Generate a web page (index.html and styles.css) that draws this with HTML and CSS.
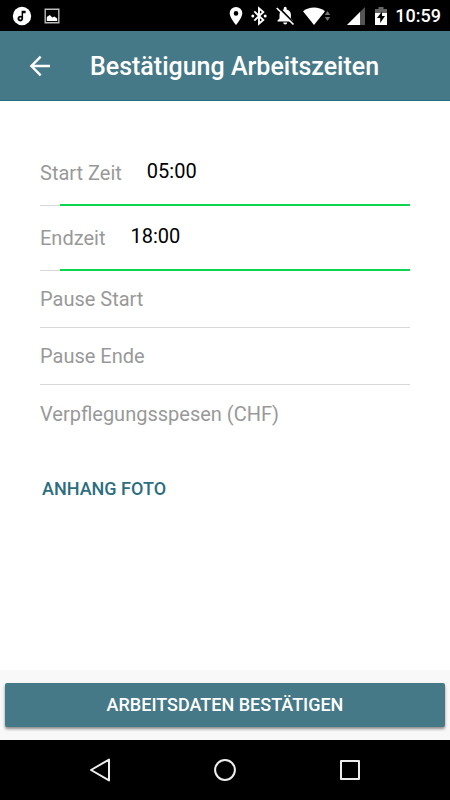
FILE: index.html
```html
<!DOCTYPE html>
<html lang="de">
<head>
<meta charset="utf-8">
<meta name="viewport" content="width=device-width, initial-scale=1">
<title>Bestätigung Arbeitszeiten</title>
<link rel="stylesheet" href="styles.css">
</head>
<body>
<div class="status">
  <svg class="icon" width="20" height="20" viewBox="0 0 20 20"><circle cx="10" cy="10" r="9.2" fill="#fff"/><path d="M9.6 4.800h4v2.400h-2.500v5.300a2.800 2.800 0 1 1-1.500-2.400z" fill="#000"/><circle cx="8.400" cy="12.500" r="1" fill="#fff"/></svg>
  <svg class="icon" width="20" height="20" viewBox="0 0 20 20"><path d="M3.200 3.200h13.600v13.600H3.200z" fill="none" stroke="#bbb" stroke-width="1.400"/><path d="M4.800 15v-4l3-2 2.500 2.500 2-1 2.900 2V15z" fill="#fff"/></svg>
  <span class="spacer"></span>
  <svg class="icon" width="14" height="20" viewBox="0 0 14 20"><path fill-rule="evenodd" d="M7 1a6.300 6.300 0 0 0-6.300 6.300C.7 12 7 19 7 19s6.300-7 6.300-11.700A6.300 6.300 0 0 0 7 1zm0 4.100a2.300 2.300 0 1 1 0 4.600 2.300 2.300 0 0 1 0-4.600z" fill="#fff"/></svg>
  <svg class="icon bluetooth" width="16" height="20" viewBox="0 0 16 20"><path d="M3.300 5.400l9 8.600L8 17.700V2.300L12.300 6l-9 8.600" fill="none" stroke="#fff" stroke-width="1.900"/><circle cx="1.800" cy="10" r="1.500" fill="#fff"/><circle cx="14.200" cy="10" r="1.500" fill="#fff"/></svg>
  <svg class="icon bell" width="20" height="20" viewBox="0 0 20 20"><path d="M2.500 15.600v-1l2-2V8.500a5.500 5.500 0 0 1 4.200-5V2.300a1.500 1.500 0 0 1 3 0v1.200a5.500 5.500 0 0 1 4.200 5v4l2 2v1.100z" fill="#fff"/><path d="M8.200 16.500h4a2 2 0 0 1-4 0z" fill="#fff"/><path d="M3.200.9l16 16.500" stroke="#000" stroke-width="2"/><path d="M1.700 2l16.800 16.500" stroke="#fff" stroke-width="1.700"/></svg>
  <svg class="icon wifi" width="28" height="20" viewBox="0 0 28 20"><path d="M0 5.300a18 18 0 0 1 22 0L11 19z" fill="#fff"/><path d="M21.800 9l2.700-4 2.700 4zm0 2h5.400l-2.700 4z" fill="#777"/></svg>
  <svg class="icon signal" width="19" height="20" viewBox="0 0 19 20"><path d="M1 19L19 1v18z" fill="#555"/><path d="M1 19L14 6v13z" fill="#fff"/></svg>
  <svg class="icon" width="12" height="20" viewBox="0 0 12 20"><path d="M0 3h3.500V1h5v2H12v5H0z" fill="#666"/><path d="M0 7h12v12H0z" fill="#fff"/><path d="M7 5.500l-5 6.500h3.200v5L10 10H7z" fill="#000"/></svg>
  <time class="clock">10:59</time>
</div>
<header class="header">
  <button class="back" type="button" aria-label="Zurück"><svg width="24" height="24" viewBox="0 0 24 24"><path d="M22 12H4M12.700 2.700L3.400 12l9.300 9.300" fill="none" stroke="#fff" stroke-width="2.400"/></svg></button>
  <h1 class="title">Bestätigung Arbeitszeiten</h1>
</header>
<form class="form" id="hours">
  <div class="field field-filled"><label for="start">Start Zeit</label><input id="start" type="text" value="05:00"></div>
  <div class="field field-filled"><label for="end">Endzeit</label><input id="end" type="text" value="18:00"></div>
  <div class="field"><label for="pstart">Pause Start</label><input id="pstart" type="text"></div>
  <div class="field"><label for="pend">Pause Ende</label><input id="pend" type="text"></div>
  <div class="field"><label for="food">Verpflegungsspesen (CHF)</label><input id="food" type="text"></div>
  <button class="attach" type="button">ANHANG FOTO</button>
</form>
<footer class="footer"><button class="submit" type="submit" form="hours">ARBEITSDATEN BESTÄTIGEN</button></footer>
<nav class="nav">
  <button type="button" aria-label="Zurück"><svg width="26" height="26" viewBox="0 0 26 26"><path d="M4 13L22 2.600v20.800z"/></svg></button>
  <button type="button" aria-label="Start"><svg width="26" height="26" viewBox="0 0 26 26"><circle cx="13" cy="13" r="9.900"/></svg></button>
  <button type="button" aria-label="Übersicht"><svg width="26" height="26" viewBox="0 0 26 26"><path d="M4 4h18v18H4z"/></svg></button>
</nav>
</body>
</html>
```

FILE: styles.css
```css
* { box-sizing: border-box; }

body {
  margin: 0;
  min-height: 100vh;
  display: flex;
  flex-direction: column;
  background: #fff;
  color: #000;
  font-family: Roboto, "Liberation Sans", sans-serif;
  font-size: 20px;
}

button, input {
  margin: 0;
  padding: 0;
  border: 0;
  background: none;
  font: inherit;
  color: inherit;
}

svg { display: block; }

.status {
  display: flex;
  align-items: center;
  height: 31px;
  padding: 0 9px 0 12px;
  background: #000;
  color: #fff;
}

.icon + .icon { margin-left: 10px; }
.spacer { flex: 1; }
.icon.bluetooth { margin-left: 8px; }
.icon.bell { margin-left: 8px; }
.icon.wifi { margin-left: 8px; }
.icon.signal { margin-left: 15px; }
.clock {
  margin-left: 8px;
  font-size: 18px;
  font-weight: 500;
}

.header {
  display: flex;
  align-items: center;
  height: 70px;
  padding: 0 28px;
  background: #457987;
  border-bottom: 1px solid #1f7180;
  color: #fff;
}

.title {
  margin: 0 0 0 38px;
  padding-top: 2px;
  font-size: 25px;
  line-height: 32px;
  font-weight: 500;
}

.form {
  flex: 1;
  padding: 40px 40px 0;
}

.field {
  position: relative;
  display: flex;
  align-items: center;
  height: 57px;
  border-bottom: 1px solid #d8d8d8;
}

.field:last-of-type { border-bottom: 0; }
.field label { color: #999; }
.field input {
  flex: 1;
  min-width: 0;
  height: 40px;
  outline: 0;
}

.field-filled { height: 65px; }
.field-filled input {
  margin-left: 25px;
  padding-bottom: 5px;
}

.field-filled::after {
  content: "";
  position: absolute;
  left: 20px;
  right: 0;
  bottom: -1px;
  height: 2px;
  background: #0cd552;
}

.attach {
  display: block;
  margin-top: 24px;
  padding: 0 2px;
  height: 44px;
  color: #2c6e7e;
  font-size: 18px;
  font-weight: 500;
}

.footer {
  padding: 13px 5px;
  background: #f8f8f8;
}

.submit {
  display: block;
  width: 100%;
  height: 44px;
  padding-bottom: 2px;
  border-radius: 2px;
  background: #457987;
  box-shadow: 0 2px 3px rgba(0, 0, 0, 0.45);
  color: #fff;
  font-size: 18px;
  font-weight: 500;
}

.nav {
  display: flex;
  justify-content: center;
  gap: 99px;
  padding: 17px 0;
  background: #000;
}

.nav svg {
  fill: none;
  stroke: #eee;
  stroke-width: 2;
  stroke-linejoin: round;
}
```
